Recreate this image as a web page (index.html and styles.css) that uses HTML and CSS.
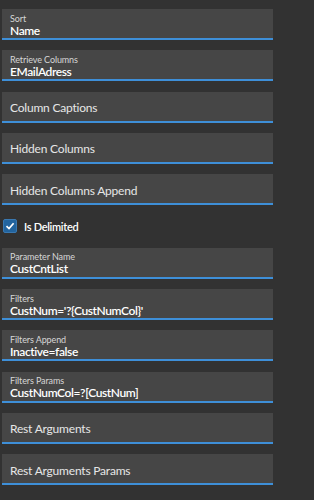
FILE: index.html
```html
<!DOCTYPE html>
<html lang="en">
<head>
  <meta charset="UTF-8" />
  <title>Properties</title>
  <link rel="stylesheet" href="styles.css">
</head>
<body>
  <div class="panel">
    <div class="field">
      <span class="label">Sort</span>
      <span class="value">Name</span>
    </div>
    <div class="field">
      <span class="label">Retrieve Columns</span>
      <span class="value">EMailAdress</span>
    </div>
    <div class="field empty"><span class="placeholder">Column Captions</span></div>
    <div class="field empty"><span class="placeholder">Hidden Columns</span></div>
    <div class="field empty"><span class="placeholder">Hidden Columns Append</span></div>

    <label class="check">
      <span class="box">
        <svg width="10" height="10" viewBox="0 0 10 10"><path d="M1.5 5.2 L4 7.6 L8.6 2.2" fill="none" stroke="#fff" stroke-width="1.7"/></svg>
      </span>
      <span class="check-text">Is Delimited</span>
    </label>

    <div class="field">
      <span class="label">Parameter Name</span>
      <span class="value">CustCntList</span>
    </div>
    <div class="field">
      <span class="label">Filters</span>
      <span class="value">CustNum='?{CustNumCol}'</span>
    </div>
    <div class="field">
      <span class="label">Filters Append</span>
      <span class="value">Inactive=false</span>
    </div>
    <div class="field">
      <span class="label">Filters Params</span>
      <span class="value">CustNumCol=?[CustNum]</span>
    </div>
    <div class="field empty"><span class="placeholder">Rest Arguments</span></div>
    <div class="field empty"><span class="placeholder">Rest Arguments Params</span></div>
  </div>
</body>
</html>
```

FILE: styles.css
```css
body {
  margin: 0;
  background: #323232;
  font-family: Lato, 'Open Sans', sans-serif;
  color: #fff;
}

.panel {
  width: 271px;
  margin-left: 2px;
  padding-top: 9px;
  display: flex;
  flex-direction: column;
  gap: 10.3px;
}

.field {
  height: 27px;
  background: #464646;
  border-bottom: 2px solid #3e8fd8;
  padding: 2px 8px 0;
  display: flex;
  flex-direction: column;
  justify-content: center;
  box-sizing: content-box;
}

.label {
  font-size: 9px;
  color: #d6d6d6;
  line-height: 11px;
  margin-top: 1px;
  letter-spacing: -0.1px;
}

.value {
  font-size: 12px;
  font-weight: 600;
  line-height: 14px;
  letter-spacing: -0.4px;
}

.placeholder {
  font-size: 12px;
  color: #e6e6e6;
  margin-top: 1px;
  letter-spacing: -0.2px;
}

.check {
  height: 22px;
  display: flex;
  align-items: center;
  gap: 7px;
  padding-left: 1px;
}

.box {
  width: 12px;
  height: 12px;
  border: 1px solid #3a78b0;
  border-radius: 2px;
  background: #22649e;
  display: flex;
  align-items: center;
  justify-content: center;
}

.check-text {
  font-size: 11px;
  font-weight: 600;
  letter-spacing: -0.3px;
}
```
